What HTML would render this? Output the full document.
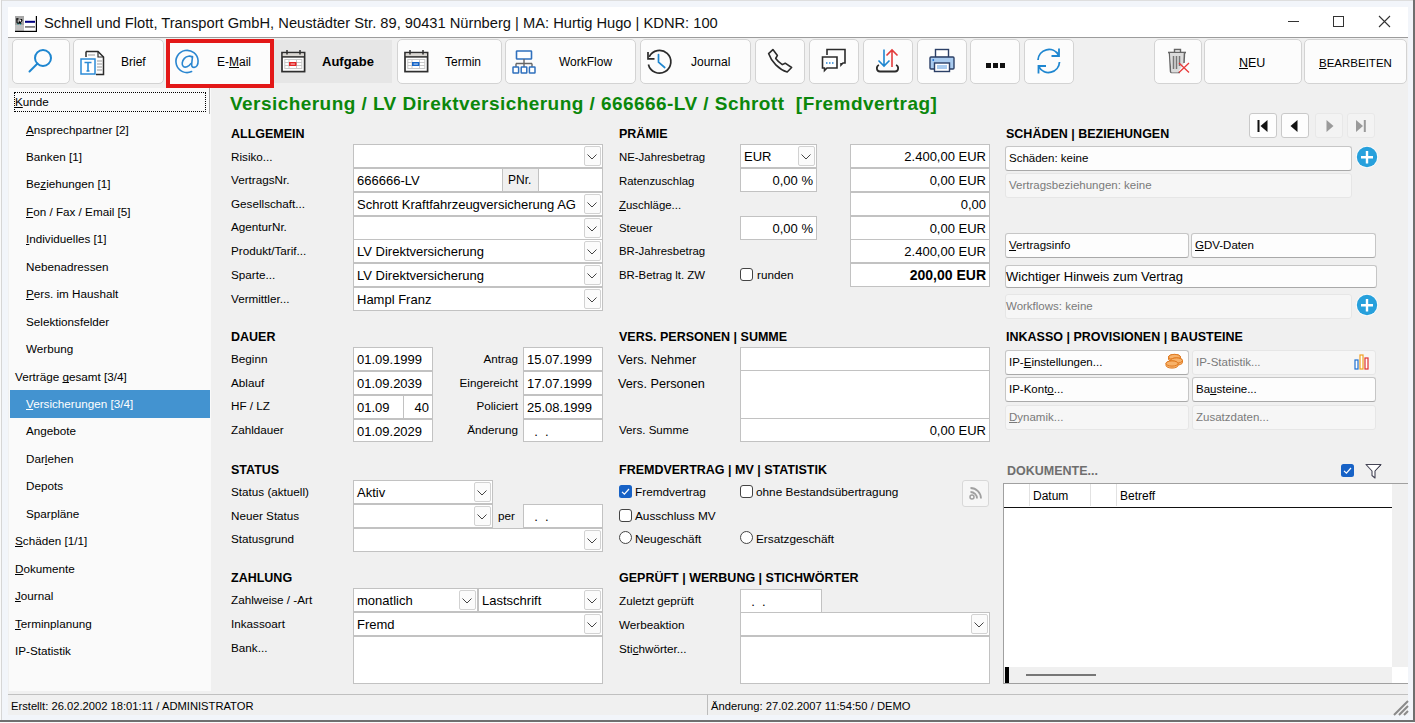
<!DOCTYPE html>
<html><head><meta charset="utf-8"><title>Vertrag</title>
<style>
html,body{margin:0;padding:0;width:1415px;height:723px;overflow:hidden;background:#f0f0f0;}
body{position:relative;font-family:"Liberation Sans", sans-serif;}
.a{position:absolute;box-sizing:border-box;}
.t{position:absolute;line-height:0;white-space:pre;font-family:"Liberation Sans", sans-serif;}
u{text-decoration:underline;text-underline-offset:1px;text-decoration-skip-ink:none;}
svg.a{overflow:visible;}
</style></head><body>
<div class="a" style="left:0px;top:0px;width:1415px;height:723px;background:#f2f5fa;"></div>
<div class="a" style="left:0px;top:0px;width:1415px;height:1px;background:#dedede;"></div>
<div class="a" style="left:0px;top:0px;width:1px;height:723px;background:#fafafa;"></div>
<div class="a" style="left:1px;top:0px;width:1px;height:723px;background:#d6d6d6;"></div>
<div class="a" style="left:1413px;top:0px;width:2px;height:723px;background:#6f6f6f;"></div>
<div class="a" style="left:0px;top:720px;width:1415px;height:2px;background:#6f6f6f;"></div>
<div class="a" style="left:0px;top:722px;width:1415px;height:1px;background:#fafafa;"></div>
<div class="a" style="left:8px;top:7px;width:1400px;height:30px;background:#fff;"></div>
<div class="a" style="left:8px;top:37px;width:1400px;height:1px;background:#9c9c9c;"></div>
<svg class="a" style="left:15px;top:16px" width="22" height="16" viewBox="0 0 22 16">
<rect x="0" y="0" width="22" height="16" fill="#fff"/>
<rect x="0" y="0" width="9" height="9" fill="#a6a6a6"/>
<rect x="0" y="9" width="9" height="6" fill="#c2c2c2"/>
<path d="M1.2 2.2 H3.5 V3.5 H2.5 V6.5 H4 V5 L5.5 3 H7 L7.5 4.5 L6 6.5 L6.5 8 L5 8 L4.5 7.5 L3 8 L1.5 7 Z" fill="#000"/>
<path d="M4.2 4.5 L5.6 3.6 L6.3 4.3 L5.2 6.2 Z" fill="#fff"/>
<rect x="2.5" y="7.6" width="1" height="1" fill="#0aa"/><rect x="5" y="7.6" width="1" height="1" fill="#0aa"/>
<rect x="10" y="4.8" width="10" height="2" fill="#000080"/>
<rect x="10" y="10" width="10" height="1.8" fill="#808080"/>
<rect x="0" y="14.8" width="22" height="1.2" fill="#000"/>
<rect x="20.8" y="0" width="1.2" height="16" fill="#000"/>
</svg>
<div class="t" style="left:44px;top:23px;font-size:14.7px;font-weight:400;color:#111;">Schnell und Flott, Transport GmbH, Neustädter Str. 89, 90431 Nürnberg | MA: Hurtig Hugo | KDNR: 100</div>
<div class="a" style="left:1288px;top:21px;width:11px;height:1px;background:#333;"></div>
<div class="a" style="left:1333px;top:16px;width:11px;height:11px;border:1px solid #333;"></div>
<svg class="a" style="left:1378px;top:15px" width="13" height="13" viewBox="0 0 13 13"><path d="M1 1 L12 12 M12 1 L1 12" stroke="#333" stroke-width="1.1"/></svg>
<div class="a" style="left:8px;top:38px;width:1400px;height:657px;background:#f0f0f0;"></div>
<div class="a" style="left:12px;top:39px;width:58px;height:45px;background:#fcfcfc;border:1px solid #d3d3d3;border-radius:5px;"></div>
<div class="a" style="left:73px;top:39px;width:91px;height:45px;background:#fcfcfc;border:1px solid #d3d3d3;border-radius:5px;"></div>
<div class="a" style="left:397px;top:39px;width:105px;height:45px;background:#fcfcfc;border:1px solid #d3d3d3;border-radius:5px;"></div>
<div class="a" style="left:505px;top:39px;width:131px;height:45px;background:#fcfcfc;border:1px solid #d3d3d3;border-radius:5px;"></div>
<div class="a" style="left:640px;top:39px;width:111px;height:45px;background:#fcfcfc;border:1px solid #d3d3d3;border-radius:5px;"></div>
<div class="a" style="left:755px;top:39px;width:50px;height:45px;background:#fcfcfc;border:1px solid #d3d3d3;border-radius:5px;"></div>
<div class="a" style="left:809px;top:39px;width:50px;height:45px;background:#fcfcfc;border:1px solid #d3d3d3;border-radius:5px;"></div>
<div class="a" style="left:863px;top:39px;width:50px;height:45px;background:#fcfcfc;border:1px solid #d3d3d3;border-radius:5px;"></div>
<div class="a" style="left:917px;top:39px;width:50px;height:45px;background:#fcfcfc;border:1px solid #d3d3d3;border-radius:5px;"></div>
<div class="a" style="left:970px;top:39px;width:50px;height:45px;background:#fcfcfc;border:1px solid #d3d3d3;border-radius:5px;"></div>
<div class="a" style="left:1024px;top:39px;width:50px;height:45px;background:#fcfcfc;border:1px solid #d3d3d3;border-radius:5px;"></div>
<div class="a" style="left:1154px;top:39px;width:48px;height:45px;background:#fcfcfc;border:1px solid #d3d3d3;border-radius:5px;"></div>
<div class="a" style="left:1204px;top:39px;width:98px;height:45px;background:#fcfcfc;border:1px solid #d3d3d3;border-radius:5px;"></div>
<div class="a" style="left:1304px;top:39px;width:103px;height:45px;background:#fcfcfc;border:1px solid #d3d3d3;border-radius:5px;"></div>
<div class="a" style="left:274px;top:40px;width:118px;height:43px;background:#e6e6e6;"></div>
<div class="a" style="left:166px;top:39px;width:108px;height:45px;background:#fcfcfc;"></div>
<div class="a" style="left:166px;top:39px;width:108px;height:49px;border:4px solid #e31818;"></div>
<svg class="a" style="left:28px;top:48px" width="26" height="26" viewBox="0 0 26 26">
<circle cx="15" cy="10" r="8" fill="none" stroke="#1e86d0" stroke-width="2"/>
<path d="M9.5 15.5 L1.5 23.5" stroke="#1e86d0" stroke-width="2" stroke-linecap="round"/></svg>
<svg class="a" style="left:80px;top:50px" width="26" height="26" viewBox="0 0 26 26">
<path d="M6 1.5 H18 L23.5 7 V24.5 H16" fill="none" stroke="#2b2b2b" stroke-width="1.5"/>
<path d="M18 1.5 V7 H23.5" fill="none" stroke="#2b2b2b" stroke-width="1.2"/>
<path d="M6 1.5 V7" stroke="#2b2b2b" stroke-width="1.5"/>
<path d="M17 11 H22 M17 14 H22 M17 17 H22 M17 20 H22" stroke="#999" stroke-width="1"/>
<path d="M8 5 H15" stroke="#999" stroke-width="1"/>
<rect x="1" y="9" width="14" height="15" fill="#fff" stroke="#2b8ad6" stroke-width="1.5"/>
<path d="M4.5 12.5 H11.5 M8 12.5 V21 M6.5 21 H9.5" stroke="#2b8ad6" stroke-width="1.6"/>
</svg>
<svg class="a" style="left:175px;top:50px" width="24" height="24" viewBox="0 0 24 24">
<path d="M16.6 21.6 A11.1 11.1 0 1 1 23.1 10.8 C23.2 15 21.6 17.4 19.1 17.4 C17.2 17.4 16.4 16.2 16.7 14 L17.5 6.6" fill="none" stroke="#2a86d0" stroke-width="1.6" stroke-linecap="round"/>
<path d="M17.3 7.2 C15.5 5.6 11.8 5.8 9.4 8.4 C6.9 11.1 6.5 14.7 8.3 16.4 C10.2 18.1 13.8 16.6 15.8 13.6" fill="none" stroke="#2a86d0" stroke-width="1.6" stroke-linecap="round"/>
</svg>
<svg class="a" style="left:281px;top:50px" width="25" height="23" viewBox="0 0 25 23">
<rect x="1" y="2.6" width="22.6" height="19" fill="#fff" stroke="#2e2e2e" stroke-width="1.7"/>
<rect x="1.8" y="3.4" width="21" height="3.3" fill="#d9d6d1"/>
<path d="M1 6.9 H23.6" stroke="#2e2e2e" stroke-width="1.5"/>
<path d="M6 0 V4.5 M19 0 V4.5" stroke="#2e2e2e" stroke-width="1.5"/>
<rect x="3.8" y="9.5" width="17" height="9" fill="none" stroke="#c9c9c9" stroke-width="1"/>
<path d="M3.8 12.5 H20.8 M3.8 15.5 H20.8 M8 9.5 V18.5 M15.5 9.5 V18.5" stroke="#c9c9c9" stroke-width="1"/>
<rect x="8" y="12" width="7.5" height="4" fill="#e32626"/>
<rect x="9.6" y="13.3" width="4.3" height="1.5" fill="#fff" opacity="0.55"/>
</svg>
<svg class="a" style="left:404px;top:50px" width="25" height="23" viewBox="0 0 25 23">
<rect x="1" y="2.6" width="22.6" height="19" fill="#fff" stroke="#2e2e2e" stroke-width="1.7"/>
<rect x="1.8" y="3.4" width="21" height="3.3" fill="#d9d6d1"/>
<path d="M1 6.9 H23.6" stroke="#2e2e2e" stroke-width="1.5"/>
<path d="M6 0 V4.5 M19 0 V4.5" stroke="#2e2e2e" stroke-width="1.5"/>
<rect x="3.8" y="9.5" width="17" height="9" fill="none" stroke="#c9c9c9" stroke-width="1"/>
<path d="M3.8 12.5 H20.8 M3.8 15.5 H20.8 M8 9.5 V18.5 M15.5 9.5 V18.5" stroke="#c9c9c9" stroke-width="1"/>
<rect x="8" y="12" width="7.5" height="4" fill="#1565c8"/>
<rect x="9.6" y="13.3" width="4.3" height="1.5" fill="#fff" opacity="0.55"/>
</svg>
<svg class="a" style="left:512px;top:50px" width="24" height="24" viewBox="0 0 24 24">
<rect x="4.5" y="1" width="15" height="8" rx="0.6" fill="#fff" stroke="#2f70bd" stroke-width="1.6"/>
<path d="M12 9 V13.5 M4 13.5 H20 M4 13.5 V17 M12 13.5 V17 M20 13.5 V17" stroke="#666" stroke-width="1.4" fill="none"/>
<rect x="1" y="17" width="5.6" height="6" rx="0.5" fill="#fff" stroke="#2f70bd" stroke-width="1.5"/>
<rect x="9.2" y="17" width="5.6" height="6" rx="0.5" fill="#fff" stroke="#2f70bd" stroke-width="1.5"/>
<rect x="17.4" y="17" width="5.6" height="6" rx="0.5" fill="#fff" stroke="#2f70bd" stroke-width="1.5"/>
</svg>
<svg class="a" style="left:646px;top:49px" width="26" height="26" viewBox="0 0 26 26">
<path d="M3.2 7.8 A11.4 11.4 0 1 1 2.4 15.5" fill="none" stroke="#2b2b2b" stroke-width="1.7"/>
<path d="M2 3 V9.8 H8.5" fill="none" stroke="#2b2b2b" stroke-width="1.7"/>
<path d="M12.5 5.5 V13.2 L18.7 18.5" fill="none" stroke="#1e86d0" stroke-width="1.7" stroke-linecap="round"/>
</svg>
<svg class="a" style="left:767px;top:48px" width="26" height="26" viewBox="0 0 26 26">
<path d="M5.9 1.6 L10.4 7.4 L8.7 10.5 Q11.5 14.2 15.3 16.6 L18.2 15.2 L24.6 19.5 L20.2 24 C12 21.5 4.2 13.5 1.6 5.6 Z" fill="none" stroke="#2b2b2b" stroke-width="1.6" stroke-linejoin="round"/>
</svg>
<svg class="a" style="left:821px;top:48px" width="26" height="26" viewBox="0 0 26 26">
<path d="M6 7 V1.5 H24 V15 H22 L20 17 V15" fill="none" stroke="#2b2b2b" stroke-width="1.6"/>
<path d="M1.5 9 H16 V20 H6 L3.5 22.5 V20 H1.5 Z" fill="#fff" stroke="#2b2b2b" stroke-width="1.6"/>
<path d="M5 15 H6.5 M8 15 H9.5 M11 15 H12.5" stroke="#2a86d4" stroke-width="1.4"/>
</svg>
<svg class="a" style="left:875px;top:48px" width="26" height="26" viewBox="0 0 26 26">
<path d="M4 17 C1 18 1 23.5 5 23.5 H20 C24 23.5 24 18 21 17" fill="none" stroke="#2b2b2b" stroke-width="1.8"/>
<path d="M9 1.5 V18 M3.5 12.5 L9 18 L14.5 12.5" fill="none" stroke="#1e86d0" stroke-width="1.6"/>
<path d="M17 19 V2 M11.5 7.5 L17 2 L22.5 7.5" fill="none" stroke="#e33b3b" stroke-width="1.6"/>
</svg>
<svg class="a" style="left:929px;top:48px" width="26" height="26" viewBox="0 0 26 26">
<rect x="6.5" y="1.5" width="13" height="8" fill="#fff" stroke="#2b3f66" stroke-width="1.4"/>
<rect x="1" y="9" width="24" height="12" rx="1" fill="#a9cbef" stroke="#2b3f66" stroke-width="1.4"/>
<rect x="5.5" y="15" width="15" height="8.5" fill="#fff" stroke="#2b3f66" stroke-width="1.4"/>
<rect x="8" y="17" width="10" height="4" fill="#a9cbef"/>
<circle cx="4.3" cy="12" r="0.9" fill="#1e6fd0"/>
</svg>
<div class="a" style="left:986px;top:63px;width:5px;height:5px;background:#111"></div>
<div class="a" style="left:993px;top:63px;width:5px;height:5px;background:#111"></div>
<div class="a" style="left:1000px;top:63px;width:5px;height:5px;background:#111"></div>
<svg class="a" style="left:1036px;top:48px" width="26" height="26" viewBox="0 0 26 26">
<path d="M2 12 A11 11 0 0 1 22.5 7" fill="none" stroke="#1e86d0" stroke-width="1.8"/>
<path d="M23.5 14 A11 11 0 0 1 3 19" fill="none" stroke="#1e86d0" stroke-width="1.8"/>
<path d="M23 0.5 V8 H15.5" fill="none" stroke="#1e86d0" stroke-width="1.8"/>
<path d="M2.5 25.5 V18 H10" fill="none" stroke="#1e86d0" stroke-width="1.8"/>
</svg>
<svg class="a" style="left:1167px;top:48px" width="24" height="26" viewBox="0 0 24 26">
<path d="M7.5 4.5 V1.5 H13.5 V4.5" fill="none" stroke="#666" stroke-width="1.4"/>
<path d="M1 4.5 H19" stroke="#666" stroke-width="1.6"/>
<path d="M2.5 5 L3.5 23.5 Q3.5 24.5 4.5 24.5 H13" fill="#dcdcdc" stroke="#666" stroke-width="1.5"/>
<path d="M3 5 H17.5 L17 15 L11 24.5 H4.5 Z" fill="#dcdcdc"/>
<path d="M17.5 5 L17 15" stroke="#666" stroke-width="1.5"/>
<path d="M6.5 8 V21 M9.5 8 V21 M12.5 8 V18" stroke="#777" stroke-width="1.5"/>
<path d="M12 15 L22 24.5 M22 15 L12 24.5" stroke="#e83a3a" stroke-width="1.3"/>
</svg>
<div class="t" style="left:121px;top:62px;font-size:12px;font-weight:400;color:#000;">Brief</div>
<div class="t" style="left:217px;top:62px;font-size:12px;font-weight:400;color:#000;">E-<u>M</u>ail</div>
<div class="t" style="left:322px;top:62px;font-size:13px;font-weight:700;color:#000;">Aufgabe</div>
<div class="t" style="left:445px;top:62px;font-size:12px;font-weight:400;color:#000;">Termin</div>
<div class="t" style="left:559px;top:62px;font-size:12px;font-weight:400;color:#000;">WorkFlow</div>
<div class="t" style="left:691px;top:62px;font-size:12px;font-weight:400;color:#000;">Journal</div>
<div class="t" style="left:1239px;top:63px;font-size:12.5px;font-weight:400;color:#000;"><u>N</u>EU</div>
<div class="t" style="left:1319px;top:63px;font-size:11.5px;font-weight:400;color:#000;"><u>B</u>EARBEITEN</div>
<div class="a" style="left:9px;top:88px;width:202px;height:603px;background:#fafafa;"></div>
<div class="a" style="left:209px;top:88px;width:1px;height:26px;background:#a8a8a8;"></div>
<div class="t" style="left:15px;top:102px;font-size:11.7px;font-weight:400;color:#000;"><u>K</u>unde</div>
<div class="t" style="left:26px;top:130px;font-size:11.7px;font-weight:400;color:#000;"><u>A</u>nsprechpartner [2]</div>
<div class="t" style="left:26px;top:157px;font-size:11.7px;font-weight:400;color:#000;">Banken [1]</div>
<div class="t" style="left:26px;top:184px;font-size:11.7px;font-weight:400;color:#000;">Be<u>z</u>iehungen [1]</div>
<div class="t" style="left:26px;top:212px;font-size:11.7px;font-weight:400;color:#000;"><u>F</u>on / Fax / Email [5]</div>
<div class="t" style="left:26px;top:239px;font-size:11.7px;font-weight:400;color:#000;"><u>I</u>ndividuelles [1]</div>
<div class="t" style="left:26px;top:267px;font-size:11.7px;font-weight:400;color:#000;">Nebenadressen</div>
<div class="t" style="left:26px;top:294px;font-size:11.7px;font-weight:400;color:#000;"><u>P</u>ers. im Haushalt</div>
<div class="t" style="left:26px;top:322px;font-size:11.7px;font-weight:400;color:#000;">Selektionsfelder</div>
<div class="t" style="left:26px;top:349px;font-size:11.7px;font-weight:400;color:#000;">Werbung</div>
<div class="t" style="left:15px;top:377px;font-size:11.7px;font-weight:400;color:#000;">Verträge <u>g</u>esamt [3/4]</div>
<div class="a" style="left:10px;top:390px;width:200px;height:28px;background:#4393d0;"></div>
<div class="t" style="left:26px;top:404px;font-size:11.7px;font-weight:400;color:#fff;"><u>V</u>ersicherungen [3/4]</div>
<div class="t" style="left:26px;top:431px;font-size:11.7px;font-weight:400;color:#000;">Angebote</div>
<div class="t" style="left:26px;top:459px;font-size:11.7px;font-weight:400;color:#000;">Dar<u>l</u>ehen</div>
<div class="t" style="left:26px;top:486px;font-size:11.7px;font-weight:400;color:#000;">Depots</div>
<div class="t" style="left:26px;top:514px;font-size:11.7px;font-weight:400;color:#000;">Sparpläne</div>
<div class="t" style="left:15px;top:541px;font-size:11.7px;font-weight:400;color:#000;"><u>S</u>chäden [1/1]</div>
<div class="t" style="left:15px;top:569px;font-size:11.7px;font-weight:400;color:#000;"><u>D</u>okumente</div>
<div class="t" style="left:15px;top:596px;font-size:11.7px;font-weight:400;color:#000;"><u>J</u>ournal</div>
<div class="t" style="left:15px;top:624px;font-size:11.7px;font-weight:400;color:#000;"><u>T</u>erminplanung</div>
<div class="t" style="left:15px;top:651px;font-size:11.7px;font-weight:400;color:#000;">IP-Statistik</div>
<div class="a" style="left:14px;top:92px;width:192px;height:20px;border:1px dotted #000;"></div>
<div class="t" style="left:230px;top:104px;font-size:19px;font-weight:700;color:#0b870b;letter-spacing:0.45px;">Versicherung / LV Direktversicherung / 666666-LV / Schrott&nbsp; [Fremdvertrag]</div>
<div class="t" style="left:231px;top:134px;font-size:12.5px;font-weight:700;color:#000;">ALLGEMEIN</div>
<div class="t" style="left:619px;top:134px;font-size:12.5px;font-weight:700;color:#000;">PRÄMIE</div>
<div class="t" style="left:1006px;top:134px;font-size:12.5px;font-weight:700;color:#000;">SCHÄDEN | BEZIEHUNGEN</div>
<div class="t" style="left:231px;top:337px;font-size:12.5px;font-weight:700;color:#000;">DAUER</div>
<div class="t" style="left:619px;top:337px;font-size:12.5px;font-weight:700;color:#000;">VERS. PERSONEN | SUMME</div>
<div class="t" style="left:1006px;top:337px;font-size:12.5px;font-weight:700;color:#000;">INKASSO | PROVISIONEN | BAUSTEINE</div>
<div class="t" style="left:231px;top:470px;font-size:12.5px;font-weight:700;color:#000;">STATUS</div>
<div class="t" style="left:619px;top:470px;font-size:12.5px;font-weight:700;color:#000;">FREMDVERTRAG | MV | STATISTIK</div>
<div class="t" style="left:1007px;top:471px;font-size:12.5px;font-weight:700;color:#6e6e6e;">DOKUMENTE...</div>
<div class="t" style="left:231px;top:578px;font-size:12.5px;font-weight:700;color:#000;">ZAHLUNG</div>
<div class="t" style="left:619px;top:578px;font-size:12.5px;font-weight:700;color:#000;">GEPRÜFT | WERBUNG | STICHWÖRTER</div>
<div class="t" style="left:231px;top:157px;font-size:11.7px;font-weight:400;color:#000;">Risiko...</div>
<div class="t" style="left:231px;top:180px;font-size:11.7px;font-weight:400;color:#000;">VertragsNr.</div>
<div class="t" style="left:231px;top:204px;font-size:11.7px;font-weight:400;color:#000;">Gesellschaft...</div>
<div class="t" style="left:231px;top:227px;font-size:11.7px;font-weight:400;color:#000;">AgenturNr.</div>
<div class="t" style="left:231px;top:251px;font-size:11.7px;font-weight:400;color:#000;">Produkt/Tarif...</div>
<div class="t" style="left:231px;top:275px;font-size:11.7px;font-weight:400;color:#000;">Sparte...</div>
<div class="t" style="left:231px;top:299px;font-size:11.7px;font-weight:400;color:#000;">Vermittler...</div>
<div class="a" style="left:353px;top:144px;width:250px;height:24px;background:#fff;border:1px solid #c2c2c2;"></div>
<div class="a" style="left:584px;top:146px;width:17px;height:20px;background:#fbfbfb;border:1px solid #d2d2d2;border-radius:2px;"></div>
<svg class="a" style="left:587px;top:154px" width="10" height="6" viewBox="0 0 10 6"><path d="M0.5 0.5 L5 5 L9.5 0.5" fill="none" stroke="#444" stroke-width="1"/></svg>
<div class="a" style="left:353px;top:168px;width:150px;height:24px;background:#fff;border:1px solid #c2c2c2;"></div>
<div class="t" style="left:357px;top:181px;font-size:13px;font-weight:400;color:#000;">666666-LV</div>
<div class="a" style="left:502px;top:168px;width:37px;height:24px;background:#f0f0f0;border:1px solid #c2c2c2;"></div>
<div class="t" style="left:508px;top:180px;font-size:12px;font-weight:400;color:#000;">PNr.</div>
<div class="a" style="left:538px;top:168px;width:65px;height:24px;background:#fff;border:1px solid #c2c2c2;"></div>
<div class="a" style="left:353px;top:192px;width:250px;height:24px;background:#fff;border:1px solid #c2c2c2;"></div>
<div class="a" style="left:584px;top:194px;width:17px;height:20px;background:#fbfbfb;border:1px solid #d2d2d2;border-radius:2px;"></div>
<svg class="a" style="left:587px;top:202px" width="10" height="6" viewBox="0 0 10 6"><path d="M0.5 0.5 L5 5 L9.5 0.5" fill="none" stroke="#444" stroke-width="1"/></svg>
<div class="t" style="left:357px;top:205px;font-size:13px;font-weight:400;color:#000;">Schrott Kraftfahrzeugversicherung AG</div>
<div class="a" style="left:353px;top:216px;width:250px;height:24px;background:#fff;border:1px solid #c2c2c2;"></div>
<div class="a" style="left:584px;top:218px;width:17px;height:20px;background:#fbfbfb;border:1px solid #d2d2d2;border-radius:2px;"></div>
<svg class="a" style="left:587px;top:226px" width="10" height="6" viewBox="0 0 10 6"><path d="M0.5 0.5 L5 5 L9.5 0.5" fill="none" stroke="#444" stroke-width="1"/></svg>
<div class="a" style="left:353px;top:239px;width:250px;height:24px;background:#fff;border:1px solid #c2c2c2;"></div>
<div class="a" style="left:584px;top:241px;width:17px;height:20px;background:#fbfbfb;border:1px solid #d2d2d2;border-radius:2px;"></div>
<svg class="a" style="left:587px;top:249px" width="10" height="6" viewBox="0 0 10 6"><path d="M0.5 0.5 L5 5 L9.5 0.5" fill="none" stroke="#444" stroke-width="1"/></svg>
<div class="t" style="left:357px;top:252px;font-size:13px;font-weight:400;color:#000;">LV Direktversicherung</div>
<div class="a" style="left:353px;top:263px;width:250px;height:24px;background:#fff;border:1px solid #c2c2c2;"></div>
<div class="a" style="left:584px;top:265px;width:17px;height:20px;background:#fbfbfb;border:1px solid #d2d2d2;border-radius:2px;"></div>
<svg class="a" style="left:587px;top:273px" width="10" height="6" viewBox="0 0 10 6"><path d="M0.5 0.5 L5 5 L9.5 0.5" fill="none" stroke="#444" stroke-width="1"/></svg>
<div class="t" style="left:357px;top:276px;font-size:13px;font-weight:400;color:#000;">LV Direktversicherung</div>
<div class="a" style="left:353px;top:287px;width:250px;height:24px;background:#fff;border:1px solid #c2c2c2;"></div>
<div class="a" style="left:584px;top:289px;width:17px;height:20px;background:#fbfbfb;border:1px solid #d2d2d2;border-radius:2px;"></div>
<svg class="a" style="left:587px;top:297px" width="10" height="6" viewBox="0 0 10 6"><path d="M0.5 0.5 L5 5 L9.5 0.5" fill="none" stroke="#444" stroke-width="1"/></svg>
<div class="t" style="left:357px;top:300px;font-size:13px;font-weight:400;color:#000;">Hampl Franz</div>
<div class="t" style="left:619px;top:157px;font-size:11.4px;font-weight:400;color:#000;">NE-Jahresbetrag</div>
<div class="t" style="left:619px;top:181px;font-size:11.4px;font-weight:400;color:#000;">Ratenzuschlag</div>
<div class="t" style="left:619px;top:205px;font-size:11.4px;font-weight:400;color:#000;"><u>Z</u>uschläge...</div>
<div class="t" style="left:619px;top:228px;font-size:11.4px;font-weight:400;color:#000;">Steuer</div>
<div class="t" style="left:619px;top:251px;font-size:11.4px;font-weight:400;color:#000;">BR-Jahresbetrag</div>
<div class="t" style="left:619px;top:275px;font-size:11.4px;font-weight:400;color:#000;">BR-Betrag lt. ZW</div>
<div class="a" style="left:740px;top:144px;width:77px;height:24px;background:#fff;border:1px solid #c2c2c2;"></div>
<div class="a" style="left:798px;top:146px;width:17px;height:20px;background:#fbfbfb;border:1px solid #d2d2d2;border-radius:2px;"></div>
<svg class="a" style="left:801px;top:154px" width="10" height="6" viewBox="0 0 10 6"><path d="M0.5 0.5 L5 5 L9.5 0.5" fill="none" stroke="#444" stroke-width="1"/></svg>
<div class="t" style="left:744px;top:157px;font-size:13px;font-weight:400;color:#000;">EUR</div>
<div class="a" style="left:740px;top:168px;width:77px;height:24px;background:#fff;border:1px solid #c2c2c2;"></div>
<div class="t" style="right:602px;top:181px;font-size:13px;font-weight:400;color:#000;">0,00 %</div>
<div class="a" style="left:740px;top:216px;width:77px;height:24px;background:#fff;border:1px solid #c2c2c2;"></div>
<div class="t" style="right:602px;top:229px;font-size:13px;font-weight:400;color:#000;">0,00 %</div>
<div class="a" style="left:740px;top:268px;width:13px;height:13px;background:#fff;border:1px solid #444;border-radius:3px;"></div>
<div class="t" style="left:757px;top:275px;font-size:11.7px;font-weight:400;color:#000;">runden</div>
<div class="a" style="left:850px;top:144px;width:140px;height:24px;background:#fff;border:1px solid #c2c2c2;"></div>
<div class="t" style="right:429px;top:157px;font-size:13px;font-weight:400;color:#000;">2.400,00 EUR</div>
<div class="a" style="left:850px;top:168px;width:140px;height:24px;background:#fff;border:1px solid #c2c2c2;"></div>
<div class="t" style="right:429px;top:181px;font-size:13px;font-weight:400;color:#000;">0,00 EUR</div>
<div class="a" style="left:850px;top:192px;width:140px;height:24px;background:#fff;border:1px solid #c2c2c2;"></div>
<div class="t" style="right:429px;top:205px;font-size:13px;font-weight:400;color:#000;">0,00</div>
<div class="a" style="left:850px;top:216px;width:140px;height:24px;background:#fff;border:1px solid #c2c2c2;"></div>
<div class="t" style="right:429px;top:229px;font-size:13px;font-weight:400;color:#000;">0,00 EUR</div>
<div class="a" style="left:850px;top:239px;width:140px;height:24px;background:#fff;border:1px solid #c2c2c2;"></div>
<div class="t" style="right:429px;top:252px;font-size:13px;font-weight:400;color:#000;">2.400,00 EUR</div>
<div class="a" style="left:850px;top:263px;width:140px;height:24px;background:#fff;border:1px solid #c2c2c2;"></div>
<div class="t" style="right:429px;top:275px;font-size:14px;font-weight:700;color:#000;">200,00 EUR</div>
<div class="a" style="left:1249px;top:113px;width:28px;height:25px;background:#fdfdfd;border:1px solid #c9c9c9;border-radius:3px;"></div>
<svg class="a" style="left:1257px;top:120px" width="12" height="12" viewBox="0 0 12 12"><rect x="0.5" y="0" width="2" height="12" fill="#111"/><path d="M10.5 0 V12 L3.5 6 Z" fill="#111"/></svg>
<div class="a" style="left:1281px;top:113px;width:28px;height:25px;background:#fdfdfd;border:1px solid #c9c9c9;border-radius:3px;"></div>
<svg class="a" style="left:1289px;top:120px" width="12" height="12" viewBox="0 0 12 12"><path d="M8.5 0 V12 L1.5 6 Z" fill="#111"/></svg>
<div class="a" style="left:1315px;top:113px;width:28px;height:25px;background:#f3f3f3;border:1px solid #e8e8e8;border-radius:3px;"></div>
<svg class="a" style="left:1323px;top:120px" width="12" height="12" viewBox="0 0 12 12"><path d="M3.5 0 V12 L10.5 6 Z" fill="#9a9a9a"/></svg>
<div class="a" style="left:1347px;top:113px;width:28px;height:25px;background:#f3f3f3;border:1px solid #e8e8e8;border-radius:3px;"></div>
<svg class="a" style="left:1355px;top:120px" width="12" height="12" viewBox="0 0 12 12"><path d="M1 0 V12 L8 6 Z" fill="#9a9a9a"/><rect x="8.8" y="0" width="2" height="12" fill="#9a9a9a"/></svg>
<div class="a" style="left:1005px;top:146px;width:347px;height:25px;background:#fdfdfd;border:1px solid #c6c6c6;border-bottom-color:#a9a9a9;border-radius:3px;"></div>
<div class="t" style="left:1009px;top:158px;font-size:11.5px;font-weight:400;color:#000;">Schäden: keine</div>
<svg class="a" style="left:1356px;top:146px" width="22" height="22" viewBox="0 0 22 22"><circle cx="11" cy="11" r="11" fill="#fff" opacity="0.8"/><circle cx="11" cy="11" r="10.2" fill="#27a0dc"/><path d="M5 11.2 H17 M11 5 V17.5" stroke="#fff" stroke-width="2.4"/></svg>
<div class="a" style="left:1005px;top:173px;width:347px;height:25px;background:#f6f6f6;border:1px solid #e6e6e6;border-radius:3px;"></div>
<div class="t" style="left:1009px;top:185px;font-size:11.5px;font-weight:400;color:#7a7a7a;">Vertragsbeziehungen: keine</div>
<div class="a" style="left:1005px;top:233px;width:184px;height:25px;background:#fdfdfd;border:1px solid #c6c6c6;border-bottom-color:#a9a9a9;border-radius:3px;"></div>
<div class="t" style="left:1009px;top:245px;font-size:11.5px;font-weight:400;color:#000;"><u>V</u>ertragsinfo</div>
<div class="a" style="left:1191px;top:233px;width:185px;height:25px;background:#fdfdfd;border:1px solid #c6c6c6;border-bottom-color:#a9a9a9;border-radius:3px;"></div>
<div class="t" style="left:1195px;top:245px;font-size:11.5px;font-weight:400;color:#000;"><u>G</u>DV-Daten</div>
<div class="a" style="left:1005px;top:265px;width:372px;height:23px;background:#fdfdfd;border:1px solid #c6c6c6;border-bottom-color:#a9a9a9;border-radius:3px;"></div>
<div class="t" style="left:1006px;top:277px;font-size:13px;font-weight:400;color:#000;">Wichtiger Hinweis zum Vertrag</div>
<div class="a" style="left:1005px;top:294px;width:347px;height:25px;background:#f6f6f6;border:1px solid #e6e6e6;border-radius:3px;"></div>
<div class="t" style="left:1006px;top:306px;font-size:11.5px;font-weight:400;color:#7a7a7a;">Workflows: keine</div>
<svg class="a" style="left:1356px;top:294px" width="22" height="22" viewBox="0 0 22 22"><circle cx="11" cy="11" r="11" fill="#fff" opacity="0.8"/><circle cx="11" cy="11" r="10.2" fill="#27a0dc"/><path d="M5 11.2 H17 M11 5 V17.5" stroke="#fff" stroke-width="2.4"/></svg>
<div class="t" style="left:231px;top:359px;font-size:11.7px;font-weight:400;color:#000;">Beginn</div>
<div class="t" style="left:231px;top:383px;font-size:11.7px;font-weight:400;color:#000;">Ablauf</div>
<div class="t" style="left:231px;top:406px;font-size:11.7px;font-weight:400;color:#000;">HF / LZ</div>
<div class="t" style="left:231px;top:430px;font-size:11.7px;font-weight:400;color:#000;">Zahldauer</div>
<div class="a" style="left:353px;top:347px;width:80px;height:24px;background:#fff;border:1px solid #c2c2c2;"></div>
<div class="t" style="left:357px;top:360px;font-size:13px;font-weight:400;color:#000;">01.09.1999</div>
<div class="a" style="left:353px;top:371px;width:80px;height:24px;background:#fff;border:1px solid #c2c2c2;"></div>
<div class="t" style="left:357px;top:384px;font-size:13px;font-weight:400;color:#000;">01.09.2039</div>
<div class="a" style="left:353px;top:395px;width:51px;height:24px;background:#fff;border:1px solid #c2c2c2;"></div>
<div class="t" style="left:357px;top:408px;font-size:13px;font-weight:400;color:#000;">01.09</div>
<div class="a" style="left:403px;top:395px;width:30px;height:24px;background:#fff;border:1px solid #c2c2c2;"></div>
<div class="t" style="right:986px;top:408px;font-size:13px;font-weight:400;color:#000;">40</div>
<div class="a" style="left:353px;top:419px;width:80px;height:23px;background:#fff;border:1px solid #c2c2c2;"></div>
<div class="t" style="left:357px;top:432px;font-size:13px;font-weight:400;color:#000;">01.09.2029</div>
<div class="t" style="right:897px;top:359px;font-size:11.7px;font-weight:400;color:#000;">Antrag</div>
<div class="a" style="left:523px;top:347px;width:80px;height:24px;background:#fff;border:1px solid #c2c2c2;"></div>
<div class="t" style="left:527px;top:360px;font-size:13px;font-weight:400;color:#000;">15.07.1999</div>
<div class="t" style="right:897px;top:383px;font-size:11.7px;font-weight:400;color:#000;">Eingereicht</div>
<div class="a" style="left:523px;top:371px;width:80px;height:24px;background:#fff;border:1px solid #c2c2c2;"></div>
<div class="t" style="left:527px;top:384px;font-size:13px;font-weight:400;color:#000;">17.07.1999</div>
<div class="t" style="right:897px;top:406px;font-size:11.7px;font-weight:400;color:#000;">Policiert</div>
<div class="a" style="left:523px;top:395px;width:80px;height:24px;background:#fff;border:1px solid #c2c2c2;"></div>
<div class="t" style="left:527px;top:408px;font-size:13px;font-weight:400;color:#000;">25.08.1999</div>
<div class="t" style="right:897px;top:430px;font-size:11.7px;font-weight:400;color:#000;">Änderung</div>
<div class="a" style="left:523px;top:419px;width:80px;height:23px;background:#fff;border:1px solid #c2c2c2;"></div>
<div class="t" style="left:527px;top:432px;font-size:13px;font-weight:400;color:#000;">&nbsp;&nbsp;.&nbsp;&nbsp;.</div>
<div class="t" style="left:618px;top:360px;font-size:12.8px;font-weight:400;color:#000;">Vers. Nehmer</div>
<div class="t" style="left:618px;top:384px;font-size:12.7px;font-weight:400;color:#000;">Vers. Personen</div>
<div class="t" style="left:619px;top:430px;font-size:11.6px;font-weight:400;color:#000;">Vers. Summe</div>
<div class="a" style="left:740px;top:347px;width:250px;height:24px;background:#fff;border:1px solid #c2c2c2;"></div>
<div class="a" style="left:740px;top:370px;width:250px;height:49px;background:#fff;border:1px solid #c2c2c2;"></div>
<div class="a" style="left:740px;top:418px;width:250px;height:24px;background:#fff;border:1px solid #c2c2c2;"></div>
<div class="t" style="right:429px;top:431px;font-size:13px;font-weight:400;color:#000;">0,00 EUR</div>
<div class="a" style="left:1005px;top:350px;width:184px;height:25px;background:#fdfdfd;border:1px solid #c6c6c6;border-bottom-color:#a9a9a9;border-radius:3px;"></div>
<div class="t" style="left:1009px;top:362px;font-size:11.5px;font-weight:400;color:#000;">IP-<u>E</u>instellungen...</div>
<div class="a" style="left:1192px;top:350px;width:184px;height:25px;background:#f6f6f6;border:1px solid #e6e6e6;border-radius:3px;"></div>
<div class="t" style="left:1196px;top:362px;font-size:11.5px;font-weight:400;color:#7a7a7a;">IP-Statistik...</div>
<div class="a" style="left:1005px;top:377px;width:184px;height:25px;background:#fdfdfd;border:1px solid #c6c6c6;border-bottom-color:#a9a9a9;border-radius:3px;"></div>
<div class="t" style="left:1009px;top:389px;font-size:11.5px;font-weight:400;color:#000;">IP-Kont<u>o</u>...</div>
<div class="a" style="left:1192px;top:377px;width:184px;height:25px;background:#fdfdfd;border:1px solid #c6c6c6;border-bottom-color:#a9a9a9;border-radius:3px;"></div>
<div class="t" style="left:1196px;top:389px;font-size:11.5px;font-weight:400;color:#000;">Ba<u>u</u>steine...</div>
<div class="a" style="left:1005px;top:405px;width:184px;height:25px;background:#f6f6f6;border:1px solid #e6e6e6;border-radius:3px;"></div>
<div class="t" style="left:1009px;top:417px;font-size:11.5px;font-weight:400;color:#7a7a7a;"><u>D</u>ynamik...</div>
<div class="a" style="left:1192px;top:405px;width:184px;height:25px;background:#f6f6f6;border:1px solid #e6e6e6;border-radius:3px;"></div>
<div class="t" style="left:1196px;top:417px;font-size:11.5px;font-weight:400;color:#7a7a7a;">Zusatzdaten...</div>
<svg class="a" style="left:1165px;top:353px" width="19" height="17" viewBox="0 0 19 17">
<g fill="#f7b26a" stroke="#e07b22" stroke-width="1">
<path d="M3.5 4 A6 2.6 0 0 1 15.5 4 V6 A6 2.6 0 0 1 3.5 6 Z"/>
<ellipse cx="9.5" cy="4" rx="6" ry="2.6"/>
<path d="M5.5 7.5 A6 2.6 0 0 1 17.5 7.5 V9.5 A6 2.6 0 0 1 5.5 9.5 Z"/>
<ellipse cx="11.5" cy="7.5" rx="6" ry="2.6"/>
<path d="M1 10.5 A6 2.6 0 0 1 13 10.5 V12.5 A6 2.6 0 0 1 1 12.5 Z"/>
<ellipse cx="7" cy="10.5" rx="6" ry="2.6"/>
</g></svg>
<svg class="a" style="left:1354px;top:353px" width="16" height="17" viewBox="0 0 16 17">
<rect x="1" y="7" width="3" height="9" fill="#fff" stroke="#1e6fd0" stroke-width="1.2"/>
<rect x="6" y="2" width="3" height="14" fill="#fff" stroke="#f0a020" stroke-width="1.2"/>
<rect x="11" y="5" width="3" height="11" fill="#fff" stroke="#e03030" stroke-width="1.2"/>
</svg>
<div class="t" style="left:231px;top:492px;font-size:11.7px;font-weight:400;color:#000;">Status (aktuell)</div>
<div class="t" style="left:231px;top:516px;font-size:11.7px;font-weight:400;color:#000;">Neuer Status</div>
<div class="t" style="left:231px;top:539px;font-size:11.7px;font-weight:400;color:#000;">Statusgrund</div>
<div class="a" style="left:353px;top:480px;width:140px;height:24px;background:#fff;border:1px solid #c2c2c2;"></div>
<div class="a" style="left:474px;top:482px;width:17px;height:20px;background:#fbfbfb;border:1px solid #d2d2d2;border-radius:2px;"></div>
<svg class="a" style="left:477px;top:490px" width="10" height="6" viewBox="0 0 10 6"><path d="M0.5 0.5 L5 5 L9.5 0.5" fill="none" stroke="#444" stroke-width="1"/></svg>
<div class="t" style="left:357px;top:493px;font-size:13px;font-weight:400;color:#000;">Aktiv</div>
<div class="a" style="left:353px;top:504px;width:140px;height:24px;background:#fff;border:1px solid #c2c2c2;"></div>
<div class="a" style="left:474px;top:506px;width:17px;height:20px;background:#fbfbfb;border:1px solid #d2d2d2;border-radius:2px;"></div>
<svg class="a" style="left:477px;top:514px" width="10" height="6" viewBox="0 0 10 6"><path d="M0.5 0.5 L5 5 L9.5 0.5" fill="none" stroke="#444" stroke-width="1"/></svg>
<div class="t" style="left:498px;top:516px;font-size:11.7px;font-weight:400;color:#000;">per</div>
<div class="a" style="left:523px;top:504px;width:80px;height:24px;background:#fff;border:1px solid #c2c2c2;"></div>
<div class="t" style="left:527px;top:517px;font-size:13px;font-weight:400;color:#000;">&nbsp;&nbsp;.&nbsp;&nbsp;.</div>
<div class="a" style="left:353px;top:528px;width:250px;height:24px;background:#fff;border:1px solid #c2c2c2;"></div>
<div class="a" style="left:584px;top:530px;width:17px;height:20px;background:#fbfbfb;border:1px solid #d2d2d2;border-radius:2px;"></div>
<svg class="a" style="left:587px;top:538px" width="10" height="6" viewBox="0 0 10 6"><path d="M0.5 0.5 L5 5 L9.5 0.5" fill="none" stroke="#444" stroke-width="1"/></svg>
<svg class="a" style="left:619px;top:485px" width="13" height="13" viewBox="0 0 13 13"><rect x="0" y="0" width="13" height="13" rx="2.5" fill="#1762c6"/><path d="M3 6.8 L5.4 9.2 L10 4" fill="none" stroke="#fff" stroke-width="1.2"/></svg>
<div class="t" style="left:635px;top:492px;font-size:11.8px;font-weight:400;color:#000;">Fremdvertrag</div>
<div class="a" style="left:740px;top:485px;width:13px;height:13px;background:#fff;border:1px solid #444;border-radius:3px;"></div>
<div class="t" style="left:756px;top:492px;font-size:11.8px;font-weight:400;color:#000;">ohne Bestandsübertragung</div>
<div class="a" style="left:619px;top:509px;width:13px;height:13px;background:#fff;border:1px solid #444;border-radius:3px;"></div>
<div class="t" style="left:635px;top:516px;font-size:11.8px;font-weight:400;color:#000;">Ausschluss MV</div>
<div class="a" style="left:619px;top:531px;width:13px;height:13px;background:#fff;border:1px solid #444;border-radius:50%;"></div>
<div class="t" style="left:635px;top:539px;font-size:11.8px;font-weight:400;color:#000;">Neugeschäft</div>
<div class="a" style="left:740px;top:531px;width:13px;height:13px;background:#fff;border:1px solid #444;border-radius:50%;"></div>
<div class="t" style="left:756px;top:539px;font-size:11.8px;font-weight:400;color:#000;">Ersatzgeschäft</div>
<div class="a" style="left:962px;top:480px;width:27px;height:27px;background:#f6f6f6;border:1px solid #d8d8d8;border-radius:3px;"></div>
<svg class="a" style="left:969px;top:487px" width="13" height="13" viewBox="0 0 13 13">
<circle cx="3" cy="10" r="2" fill="none" stroke="#a0a0a0" stroke-width="1.5"/>
<path d="M1.5 5 A6.5 6.5 0 0 1 8 11.5 M1.5 1 A10.5 10.5 0 0 1 12 11.5" fill="none" stroke="#a0a0a0" stroke-width="1.8"/>
</svg>
<div class="t" style="left:231px;top:600px;font-size:11.7px;font-weight:400;color:#000;">Zahlweise / -Art</div>
<div class="t" style="left:231px;top:624px;font-size:11.7px;font-weight:400;color:#000;">Inkassoart</div>
<div class="t" style="left:231px;top:648px;font-size:11.7px;font-weight:400;color:#000;">Bank...</div>
<div class="a" style="left:353px;top:588px;width:125px;height:24px;background:#fff;border:1px solid #c2c2c2;"></div>
<div class="a" style="left:459px;top:590px;width:17px;height:20px;background:#fbfbfb;border:1px solid #d2d2d2;border-radius:2px;"></div>
<svg class="a" style="left:462px;top:598px" width="10" height="6" viewBox="0 0 10 6"><path d="M0.5 0.5 L5 5 L9.5 0.5" fill="none" stroke="#444" stroke-width="1"/></svg>
<div class="t" style="left:357px;top:601px;font-size:13px;font-weight:400;color:#000;">monatlich</div>
<div class="a" style="left:478px;top:588px;width:125px;height:24px;background:#fff;border:1px solid #c2c2c2;"></div>
<div class="a" style="left:584px;top:590px;width:17px;height:20px;background:#fbfbfb;border:1px solid #d2d2d2;border-radius:2px;"></div>
<svg class="a" style="left:587px;top:598px" width="10" height="6" viewBox="0 0 10 6"><path d="M0.5 0.5 L5 5 L9.5 0.5" fill="none" stroke="#444" stroke-width="1"/></svg>
<div class="t" style="left:482px;top:601px;font-size:13px;font-weight:400;color:#000;">Lastschrift</div>
<div class="a" style="left:353px;top:612px;width:250px;height:24px;background:#fff;border:1px solid #c2c2c2;"></div>
<div class="a" style="left:584px;top:614px;width:17px;height:20px;background:#fbfbfb;border:1px solid #d2d2d2;border-radius:2px;"></div>
<svg class="a" style="left:587px;top:622px" width="10" height="6" viewBox="0 0 10 6"><path d="M0.5 0.5 L5 5 L9.5 0.5" fill="none" stroke="#444" stroke-width="1"/></svg>
<div class="t" style="left:357px;top:625px;font-size:13px;font-weight:400;color:#000;">Fremd</div>
<div class="a" style="left:353px;top:636px;width:250px;height:48px;background:#fff;border:1px solid #c2c2c2;"></div>
<div class="t" style="left:619px;top:601px;font-size:11.7px;font-weight:400;color:#000;">Zuletzt geprüft</div>
<div class="t" style="left:619px;top:625px;font-size:11.7px;font-weight:400;color:#000;">Werbeaktion</div>
<div class="t" style="left:619px;top:649px;font-size:11.7px;font-weight:400;color:#000;">Sti<u>c</u>hwörter...</div>
<div class="a" style="left:740px;top:589px;width:82px;height:24px;background:#fff;border:1px solid #c2c2c2;"></div>
<div class="t" style="left:744px;top:602px;font-size:13px;font-weight:400;color:#000;">&nbsp;&nbsp;.&nbsp;&nbsp;.</div>
<div class="a" style="left:740px;top:612px;width:250px;height:24px;background:#fff;border:1px solid #c2c2c2;"></div>
<div class="a" style="left:971px;top:614px;width:17px;height:20px;background:#fbfbfb;border:1px solid #d2d2d2;border-radius:2px;"></div>
<svg class="a" style="left:974px;top:622px" width="10" height="6" viewBox="0 0 10 6"><path d="M0.5 0.5 L5 5 L9.5 0.5" fill="none" stroke="#444" stroke-width="1"/></svg>
<div class="a" style="left:740px;top:636px;width:250px;height:48px;background:#fff;border:1px solid #c2c2c2;"></div>
<svg class="a" style="left:1341px;top:464px" width="13" height="13" viewBox="0 0 13 13"><rect x="0" y="0" width="13" height="13" rx="2.5" fill="#1762c6"/><path d="M3 6.8 L5.4 9.2 L10 4" fill="none" stroke="#fff" stroke-width="1.2"/></svg>
<svg class="a" style="left:1365px;top:463px" width="17" height="16" viewBox="0 0 17 16">
<path d="M1 1.5 H16 L10 8 V15 L7 12.5 V8 Z" fill="#fff" stroke="#445" stroke-width="1.1" stroke-linejoin="round"/>
<path d="M10 8 L16 2" stroke="#445" stroke-width="1"/>
</svg>
<div class="a" style="left:1003px;top:483px;width:405px;height:201px;background:#f0f0f0;"></div>
<div class="a" style="left:1003px;top:483px;width:405px;height:1px;background:#a0a0a0;"></div>
<div class="a" style="left:1003px;top:483px;width:1px;height:201px;background:#a0a0a0;"></div>
<div class="a" style="left:1003px;top:683px;width:405px;height:1px;background:#a0a0a0;"></div>
<div class="a" style="left:1004px;top:484px;width:388px;height:183px;background:#fff;"></div>
<div class="a" style="left:1392px;top:667px;width:16px;height:16px;background:#fff;"></div>
<div class="a" style="left:1004px;top:507px;width:388px;height:1px;background:#111;"></div>
<div class="a" style="left:1029px;top:484px;width:1px;height:22px;background:#e2e2e2;"></div>
<div class="a" style="left:1090px;top:484px;width:1px;height:22px;background:#e2e2e2;"></div>
<div class="a" style="left:1116px;top:484px;width:1px;height:22px;background:#e2e2e2;"></div>
<div class="t" style="left:1033px;top:496px;font-size:12px;font-weight:400;color:#000;">Datum</div>
<div class="t" style="left:1120px;top:496px;font-size:12px;font-weight:400;color:#000;">Betreff</div>
<div class="a" style="left:1005px;top:667px;width:4px;height:16px;background:#000;"></div>
<div class="a" style="left:1026px;top:674px;width:70px;height:2px;background:#777;"></div>
<div class="a" style="left:8px;top:694px;width:1400px;height:1px;background:#c0c0c0;"></div>
<div class="a" style="left:8px;top:695px;width:1400px;height:20px;background:#f0f0f0;"></div>
<div class="a" style="left:707px;top:695px;width:1px;height:20px;background:#bcbcbc;"></div>
<div class="t" style="left:11px;top:706px;font-size:11.2px;font-weight:400;color:#000;">Erstellt: 26.02.2002 18:01:11 / ADMINISTRATOR</div>
<div class="t" style="left:711px;top:706px;font-size:11.2px;font-weight:400;color:#000;">Änderung: 27.02.2007 11:54:50 / DEMO</div>
<svg class="a" style="left:1393px;top:700px" width="15" height="15" viewBox="0 0 15 15">
<path d="M15 1 L1 15 M15 6 L6 15 M15 11 L11 15" stroke="#8a8a8a" stroke-width="2"/>
</svg>
</body></html>
